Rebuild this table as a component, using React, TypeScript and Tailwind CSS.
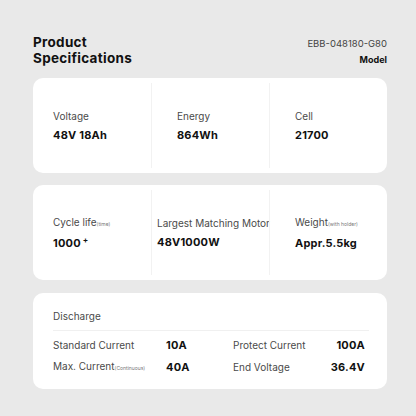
import React from "react";

const font = { fontFamily: "Inter, 'Noto Sans', sans-serif" };

function Cell({ label, sub, value, sup, cls }: { label: string; sub?: string; value: string; sup?: string; cls: string }) {
  return (
    <div className={`flex flex-col justify-center ${cls}`}>
      <div className="text-[10px] leading-[13px] text-[#4a4a4a] whitespace-nowrap">
        {label}
        {sub && <span className="text-[5px] text-[#777]">{sub}</span>}
      </div>
      <div className="mt-[6px] text-[11px] leading-[13px] font-bold text-[#111] whitespace-nowrap tracking-[0.2px]">
        {value}
        {sup && <sup className="text-[8px] ml-[2px]">{sup}</sup>}
      </div>
    </div>
  );
}

export default function App() {
  return (
    <div className="w-[416px] h-[416px] bg-[#e9e9e9] flex flex-col pl-[33px] pr-[29px] pt-[34px]" style={font}>
      <div className="flex justify-between items-start h-[44px]">
        <div className="text-[13.5px] leading-[16px] font-bold text-[#111] tracking-[0.3px]">
          Product
          <br />
          Specifications
        </div>
        <div className="flex flex-col items-end pt-[3px]">
          <div className="text-[9.5px] leading-[13px] text-[#444]">EBB-048180-G80</div>
          <div className="text-[9px] leading-[12px] font-bold text-[#111] mt-[4px]">Model</div>
        </div>
      </div>

      <div className="bg-white rounded-[10px] h-[95px] grid grid-cols-3 py-[5px]">
        <Cell label="Voltage" value="48V 18Ah" cls="pl-[20px]" />
        <Cell label="Energy" value="864Wh" cls="pl-[25px] border-l border-[#f2f2f2]" />
        <Cell label="Cell" value="21700" cls="pl-[25px] border-l border-[#f2f2f2]" />
      </div>

      <div className="bg-white rounded-[10px] h-[95px] grid grid-cols-3 py-[5px] mt-[12px]">
        <Cell label="Cycle life" sub="(time)" value="1000" sup="+" cls="pl-[20px]" />
        <Cell label="Largest Matching Motor" value="48V1000W" cls="pl-[5px] border-l border-[#f2f2f2]" />
        <Cell label="Weight" sub="(with holder)" value="Appr.5.5kg" cls="pl-[25px] border-l border-[#f2f2f2]" />
      </div>

      <div className="bg-white rounded-[10px] h-[96px] mt-[13px] pl-[20px] pr-[22px] pt-[16px]">
        <div className="text-[10px] leading-[14px] text-[#4a4a4a] pb-[7px] border-b border-[#f0f0f0] mr-[-4px]">Discharge</div>
        <div className="grid grid-cols-[113px_67px_1fr] mt-[7px] text-[10px] leading-[14px] items-center gap-y-[7px]">
          <div className="text-[#4a4a4a]">Standard Current</div>
          <div className="font-bold text-[11px] text-[#111] tracking-[0.2px]">10A</div>
          <div className="flex justify-between">
            <span className="text-[#4a4a4a]">Protect Current</span>
            <span className="font-bold text-[11px] text-[#111] tracking-[0.2px]">100A</span>
          </div>
          <div className="text-[#4a4a4a] whitespace-nowrap">
            Max. Current<span className="text-[5px] text-[#777]">(Continuous)</span>
          </div>
          <div className="font-bold text-[11px] text-[#111] tracking-[0.2px]">40A</div>
          <div className="flex justify-between">
            <span className="text-[#4a4a4a]">End Voltage</span>
            <span className="font-bold text-[11px] text-[#111] tracking-[0.2px]">36.4V</span>
          </div>
        </div>
      </div>
    </div>
  );
}
